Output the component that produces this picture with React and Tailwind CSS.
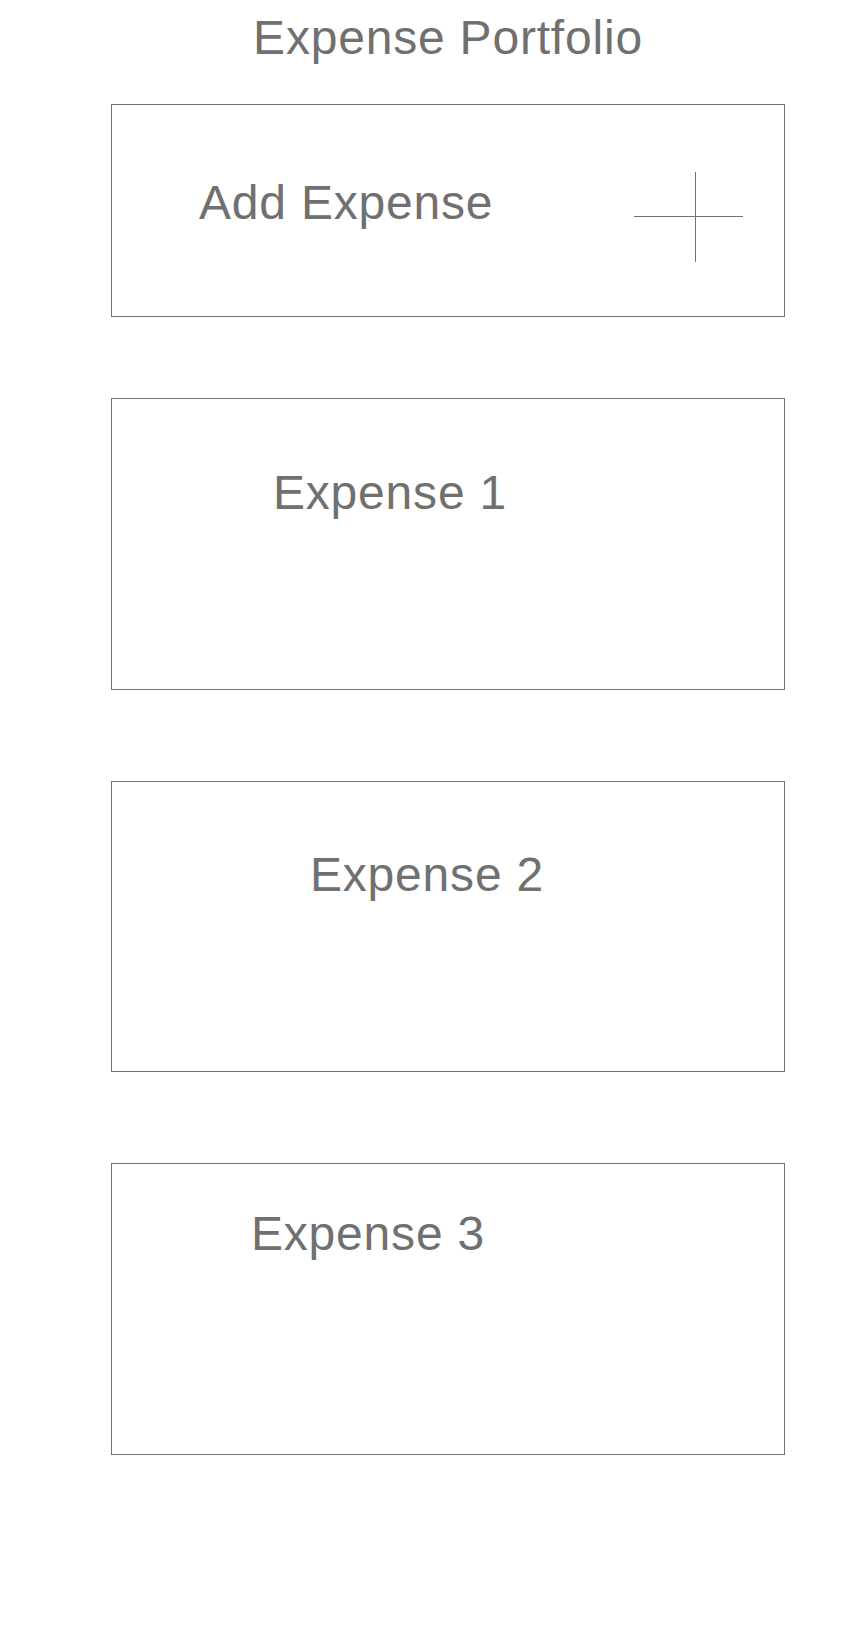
import React from "react";

const font = { fontFamily: '"Liberation Sans", Arial, sans-serif' };

// Plus glyph drawn as two thin strokes, matching the wireframe
const PlusMark = () => (
  <svg width="109" height="90" viewBox="0 0 109 90" className="shrink-0 mt-[67px] ml-auto mr-[41px]">
    <line x1="0" y1="44.5" x2="109" y2="44.5" stroke="#707070" strokeWidth="1" />
    <line x1="61.5" y1="0" x2="61.5" y2="90" stroke="#707070" strokeWidth="1" />
  </svg>
);

const ExpenseCard = ({ title, className, textClass }) => (
  <div className={`border border-[#707070] w-[674px] ${className}`}>
    <p className={`text-[48px] leading-none tracking-[0.8px] text-[#707070] ${textClass}`}>{title}</p>
  </div>
);

const App = () => {
  const expenses = [
    { id: 1, title: "Expense 1", className: "h-[292px] mt-[81px]", textClass: "pt-[70px] pl-[161px]" },
    { id: 2, title: "Expense 2", className: "h-[291px] mt-[91px]", textClass: "pt-[69px] pl-[198px]" },
    { id: 3, title: "Expense 3", className: "h-[292px] mt-[91px]", textClass: "pt-[46px] pl-[139px]" },
  ];

  return (
    <div className="bg-white min-h-[1625px] w-[868px]" style={font}>
      <div className="w-[674px] ml-[111px] pt-[14px]">
        <h1 className="text-[48px] leading-none tracking-[0.8px] text-[#707070] text-center font-normal">
          Expense Portfolio
        </h1>

        {/* Add expense */}
        <div className="border border-[#707070] w-[674px] h-[213px] mt-[42px] flex items-start">
          <p className="text-[48px] leading-none tracking-[0.8px] text-[#707070] pt-[74px] pl-[87px]">
            Add Expense
          </p>
          <PlusMark />
        </div>

        {expenses.map((item) => (
          <ExpenseCard
            key={item.id}
            title={item.title}
            className={item.className}
            textClass={item.textClass}
          />
        ))}
      </div>
    </div>
  );
};

export default App;
